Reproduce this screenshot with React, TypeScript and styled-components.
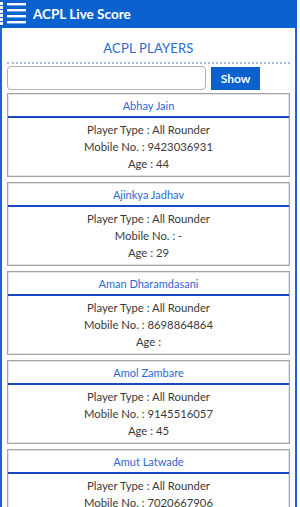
import React from "react";
import styled, { createGlobalStyle } from "styled-components";

const Global = createGlobalStyle`
  html, body { margin: 0; padding: 0; background: #fff; }
  body { font-family: "Lato", "Open Sans", sans-serif; }
`;

const Page = styled.div`
  width: 297px;
  min-height: 507px;
  display: flex;
  flex-direction: column;
`;

const Header = styled.header`
  height: 28px;
  background: #0b62cf;
  display: flex;
  align-items: center;
  gap: 6px;
  flex-shrink: 0;
`;

const HeaderTitle = styled.h1`
  margin: 0;
  color: #fff;
  font-size: 13.5px;
  font-weight: 700;
  font-family: "Lato", sans-serif;
`;

const Body = styled.main`
  flex: 1;
  border-left: 2px solid #1b63d6;
  border-right: 2px solid #1b63d6;
  padding: 0 5px;
  display: flex;
  flex-direction: column;
`;

const Title = styled.h2`
  margin: 0;
  padding: 12px 0 6px;
  text-align: center;
  font-size: 13px;
  font-weight: 400;
  color: #2a69d3;
  letter-spacing: 0.2px;
  border-bottom: 2px dotted #a9bde6;
`;

const SearchRow = styled.div`
  display: flex;
  align-items: center;
  gap: 5px;
  margin-top: 2px;
  margin-bottom: 3px;
`;

const Input = styled.input`
  width: 199px;
  height: 24px;
  box-sizing: border-box;
  border: 1px solid #b0b0b0;
  border-radius: 4px;
  outline: none;
`;

const Button = styled.button`
  width: 49px;
  height: 23px;
  border: none;
  background: #0b62cf;
  color: #fff;
  font-family: "Lato", sans-serif;
  font-weight: 700;
  font-size: 12px;
  padding: 0;
`;

const List = styled.div`
  display: flex;
  flex-direction: column;
  gap: 5px;
`;

const Card = styled.div`
  border: 1px solid #a4a4a4;
  box-shadow: inset 0 0 0 1px #e4e4e4;
`;

const CardHead = styled.div`
  height: 22px;
  display: flex;
  align-items: center;
  justify-content: center;
  color: #2a69d3;
  font-size: 11px;
  border-bottom: 2px solid #1448c4;
`;

const CardBody = styled.div`
  padding: 3px 0 4px;
  display: flex;
  flex-direction: column;
  align-items: center;
`;

const Line = styled.div`
  font-size: 11.3px;
  line-height: 17px;
  color: #3a3a3a;
`;

const players = [
  { name: "Abhay Jain", type: "All Rounder", mobile: "9423036931", age: "44" },
  { name: "Ajinkya Jadhav", type: "All Rounder", mobile: "-", age: "29" },
  { name: "Aman Dharamdasani", type: "All Rounder", mobile: "8698864864", age: "" },
  { name: "Amol Zambare", type: "All Rounder", mobile: "9145516057", age: "45" },
  { name: "Amut Latwade", type: "All Rounder", mobile: "7020667906", age: "" },
];

const Menu = () => (
  <svg width="27" height="26" viewBox="0 0 27 26">
    {[2, 6, 10, 14, 18, 22].map((y) => (
      <rect key={y} x="0" y={y - 1} width="3" height="3" fill="#fff" />
    ))}
    {[3, 9, 15, 21].map((y) => (
      <rect key={y} x="7" y={y - 1} width="19" height="2.4" fill="#fff" />
    ))}
  </svg>
);

export default function App() {
  return (
    <>
      <Global />
      <Page>
        <Header>
          <Menu />
          <HeaderTitle>ACPL Live Score</HeaderTitle>
        </Header>
        <Body>
          <Title>ACPL PLAYERS</Title>
          <SearchRow>
            <Input />
            <Button>Show</Button>
          </SearchRow>
          <List>
            {players.map((p) => (
              <Card key={p.name}>
                <CardHead>{p.name}</CardHead>
                <CardBody>
                  <Line>Player Type : {p.type}</Line>
                  <Line>Mobile No. : {p.mobile}</Line>
                  <Line>Age : {p.age}</Line>
                </CardBody>
              </Card>
            ))}
          </List>
        </Body>
      </Page>
    </>
  );
}
